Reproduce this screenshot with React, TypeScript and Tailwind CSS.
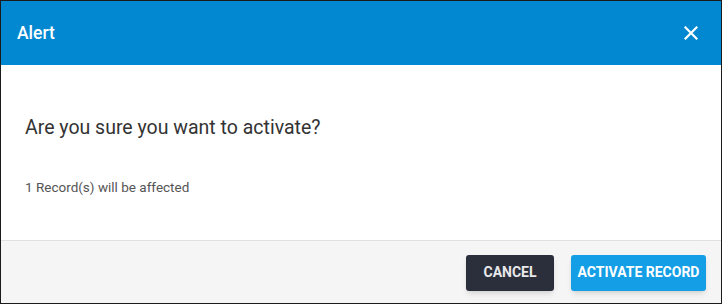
import React from "react";

const App: React.FC = () => {
  return (
    <div
      className="w-[722px] h-[304px] border border-[#1b1b1b] bg-white flex flex-col"
      style={{ fontFamily: "Roboto, 'Liberation Sans', sans-serif" }}
    >
      {/* Header */}
      <div className="h-16 bg-[#0288d1] flex items-center justify-between pl-4 pr-[23px] shrink-0">
        <span className="text-white text-[17.5px] font-medium">Alert</span>
        <button className="text-white" title="Close">
          <svg width="14" height="14" viewBox="0 0 14 14" fill="none" stroke="currentColor" strokeWidth="2.2" strokeLinecap="square">
            <path d="M1.5 1.5L12.5 12.5M12.5 1.5L1.5 12.5" />
          </svg>
        </button>
      </div>

      {/* Body */}
      <div className="flex-1 flex flex-col px-6 pt-[51px]">
        <div className="text-[19.5px] text-[#333] leading-6">Are you sure you want to activate?</div>
        <div className="text-[13.5px] text-[#555] leading-4 mt-[39px]">1 Record(s) will be affected</div>
      </div>

      {/* Footer */}
      <div className="h-[63px] shrink-0 bg-[#f5f5f5] border-t border-[#e0e0e0] flex items-center justify-end gap-[17px] pr-[15px] pt-[1px]">
        <button className="h-9 w-[88px] rounded-[3px] bg-[#2b2f3b] text-[#e8e8ea] text-[14px] font-bold uppercase shadow-md">
          Cancel
        </button>
        <button className="h-9 w-[135px] rounded-[3px] bg-[#139ee5] text-white text-[14px] font-bold uppercase shadow-md">
          Activate Record
        </button>
      </div>
    </div>
  );
};

export default App;
